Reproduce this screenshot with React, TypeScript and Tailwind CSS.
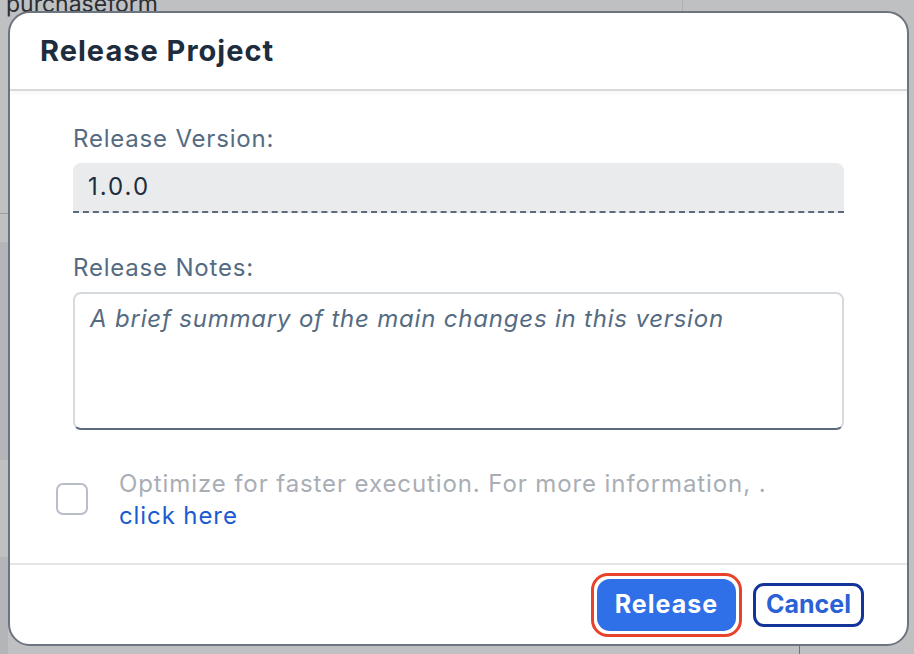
import React from "react";

const font = { fontFamily: "Inter, 'Noto Sans', sans-serif" };

function ReleaseDialog() {
  return (
    <div className="absolute left-[8px] top-[11px] flex h-[635px] w-[901px] flex-col overflow-hidden rounded-[22px] border-2 border-[#6c7480] bg-white">
      <div className="flex h-[78px] shrink-0 items-center border-b-2 border-[#d9d9d9] px-[30px] shadow-[0_3px_4px_rgba(0,0,0,0.03)]">
        <h1 className="text-[29px] font-bold tracking-[1px] text-[#1d2d3e]">Release Project</h1>
      </div>

      <div className="flex flex-1 flex-col px-[63px] pt-[34px]">
        <label className="text-[24px] leading-[28px] tracking-[0.8px] text-[#556b82]">Release Version:</label>
        <div className="mt-[10px] flex h-[50px] w-[771px] items-center rounded-t-[8px] border-b-2 border-dashed border-[#5b6b7d] bg-[#eaebec] px-[15px] text-[24px] tracking-[2px] text-[#1d2d3e]">
          1.0.0
        </div>

        <label className="mt-[41px] text-[24px] leading-[28px] tracking-[0.8px] text-[#556b82]">Release Notes:</label>
        <div className="mt-[10px] h-[138px] w-[771px] rounded-[8px] border-2 border-b-[#5b6b7d] border-[#d5dadf] px-[15px] pt-[7px] text-[24px] italic tracking-[0.8px] text-[#556b82]">
          A brief summary of the main changes in this version
        </div>

        <div className="-ml-[17px] mt-[38px] flex items-start gap-[31px]">
          <div className="mt-[15px] h-[32px] w-[32px] shrink-0 rounded-[7px] border-2 border-[#b8bec7]" />
          <div className="text-[24px] leading-[32px] tracking-[0.9px] text-[#a9aeb5]">
            Optimize for faster execution. For more information, .
            <br />
            <span className="text-[#1a5bd1]">click here</span>
          </div>
        </div>
      </div>

      <div className="flex h-[81px] shrink-0 items-center justify-end gap-[11px] border-t-2 border-[#e5e5e5] pr-[43px]">
        <div className="rounded-[17px] border-[3px] border-[#e8432a] p-[3px]">
          <button className="h-[52px] rounded-[13px] bg-[#2f6fe8] px-[18px] text-[25px] font-bold tracking-[1px] text-white">
            Release
          </button>
        </div>
        <button className="h-[44px] rounded-[11px] border-[3px] border-[#13349a] px-[10px] text-[25px] font-bold text-[#2a62d6]">
          Cancel
        </button>
      </div>
    </div>
  );
}

export default function App() {
  return (
    <div className="relative h-[654px] w-[914px] overflow-hidden bg-[#bfc0c2]" style={font}>
      <div className="absolute left-[6px] top-[-10px] text-[23px] leading-[28px] text-[#2b2e33]">purchaseform</div>
      <div className="absolute left-[682px] top-0 h-[12px] w-px bg-[#aeb0b3]" />
      <div className="absolute left-[799px] top-[646px] h-[8px] w-px bg-[#6c7480]" />
      <div className="absolute left-0 top-[213px] h-px w-[8px] bg-[#9aa0a8]" />
      <div className="absolute left-0 top-[242px] h-[218px] w-[8px] bg-[#b3b5b8]" />
      <div className="absolute left-0 top-[557px] h-[97px] w-[8px] bg-[#b3b5b8]" />
      <ReleaseDialog />
    </div>
  );
}
